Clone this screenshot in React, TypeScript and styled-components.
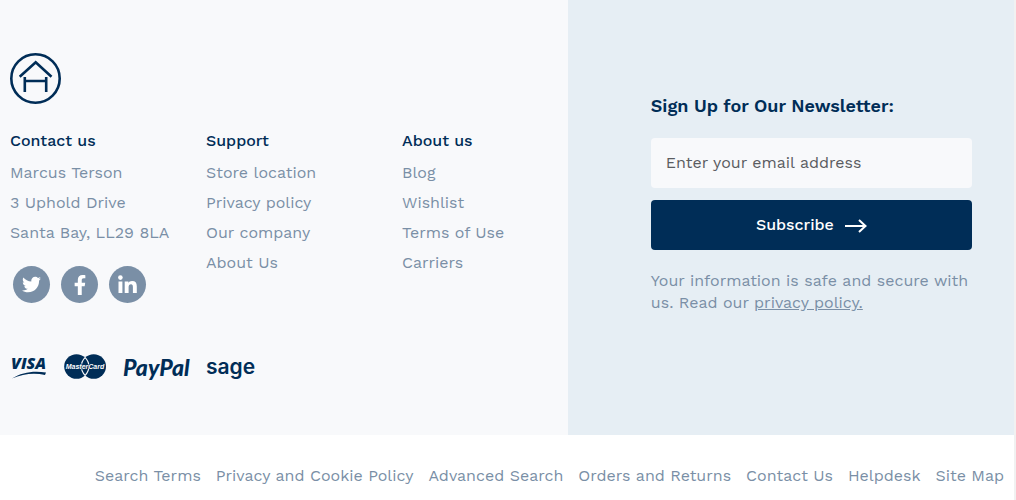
import React from "react";
import styled, { createGlobalStyle } from "styled-components";
import { FaFacebookF, FaTwitter } from "react-icons/fa";

const navy = "#002d57";
const slate = "#7a8fa6";
const sans = '"Work Sans", "Noto Sans", sans-serif';

const GlobalStyle = createGlobalStyle`
  * { box-sizing: border-box; }
  body { margin: 0; background: #fff; font-family: ${sans}; font-size: 16px; color: ${slate}; }
  h2, h3, p, ul { margin: 0; padding: 0; }
  ul { list-style: none; }
`;

const Page = styled.footer`
  border-right: 2px solid #f1f1f1;
  min-height: 100vh;
`;

const Panels = styled.div`
  display: grid;
  grid-template-columns: 56fr 44fr;
`;

const Info = styled.section`
  background: #f8f9fb;
  padding: 53px 0 53px 10px;
`;

const HomeLink = styled.a`
  display: block;
  width: 51px;
  height: 51px;
`;

const Columns = styled.div`
  display: grid;
  grid-template-columns: repeat(2, 196px) 1fr;
  margin-top: 20px;
`;

const ColumnTitle = styled.h3`
  font-size: 16px;
  line-height: 34px;
  font-weight: 500;
  color: ${navy};
`;

const Line = styled.li`
  line-height: 30px;
  white-space: nowrap;
`;

const PlainLink = styled.a`
  color: ${slate};
  text-decoration: none;
`;

const Social = styled.div`
  display: flex;
  gap: 11px;
  padding: 18px 0 0 3px;
`;

const SocialLink = styled.a`
  display: flex;
  align-items: center;
  justify-content: center;
  width: 37px;
  height: 37px;
  border-radius: 50%;
  background: ${slate};
  color: #fff;
`;

const Payments = styled.div`
  display: flex;
  margin-top: 51px;
  svg { display: block; overflow: visible; }
`;

const Newsletter = styled.section`
  background: #e6eef4;
  padding: 90px 42px 0 83px;
`;

const NewsletterTitle = styled.h2`
  font-size: 18px;
  line-height: 32px;
  font-weight: 600;
  color: ${navy};
`;

const Form = styled.form`
  display: grid;
  gap: 12px;
  margin: 16px 0 20px;
`;

const EmailInput = styled.input`
  width: 100%;
  height: 50px;
  padding: 0 15px 2px;
  border: 0;
  border-radius: 4px;
  background: #f8f9fb;
  font: 16px ${sans};
  color: #5a5c61;
  &::placeholder { color: #5a5c61; opacity: 1; }
`;

const SubscribeButton = styled.button`
  display: flex;
  align-items: center;
  justify-content: center;
  gap: 11px;
  height: 50px;
  padding: 0 0 2px;
  border: 0;
  border-radius: 4px;
  background: ${navy};
  color: #fff;
  font: 500 16px ${sans};
`;

const Note = styled.p`
  line-height: 22px;
`;

const PolicyLink = styled.a`
  color: ${slate};
`;

const BottomNav = styled.nav`
  display: flex;
  justify-content: flex-end;
  gap: 15px;
  padding: 30px 10px 0;
  line-height: 22px;
  white-space: nowrap;
`;

function LinkedInMark({ size }: { size: number }) {
  return (
    <svg width={size} height={size} viewBox="0 0 19 19" fill="currentColor">
      <circle cx="2.4" cy="2.6" r="2.3" />
      <path d="M.5 6.4h3.9V18H.5zM6.7 6.4h3.7V8c.7-1.2 1.9-1.9 3.7-1.9 3.3 0 4.7 1.9 4.7 5.2V18h-3.9v-6c0-1.7-.5-2.7-1.9-2.7-1.6 0-2.4 1.1-2.4 2.8V18H6.7z" />
    </svg>
  );
}

const contact = ["Marcus Terson", "3 Uphold Drive", "Santa Bay, LL29 8LA"];
const linkColumns = [
  { title: "Support", links: ["Store location", "Privacy policy", "Our company", "About Us"] },
  { title: "About us", links: ["Blog", "Wishlist", "Terms of Use", "Carriers"] },
];
const socials = [
  { label: "Twitter", Icon: FaTwitter, size: 19 },
  { label: "Facebook", Icon: FaFacebookF, size: 20 },
  { label: "LinkedIn", Icon: LinkedInMark, size: 19 },
];
const bottomLinks = [
  "Search Terms", "Privacy and Cookie Policy", "Advanced Search",
  "Orders and Returns", "Contact Us", "Helpdesk", "Site Map",
];

function HouseLogo() {
  return (
    <svg width="51" height="51" viewBox="0 0 51 51" fill="none" stroke={navy}>
      <circle cx="25.5" cy="25.5" r="24.2" strokeWidth="2.6" />
      <path d="M9.7 23.8 25.7 9.2 41.5 23.8M14.8 24v15M36.2 24v15M14.8 28h21.4" strokeWidth="2.6" />
    </svg>
  );
}

function PaymentLogos() {
  return (
    <svg width="248" height="28" viewBox="0 0 248 28" fill={navy} role="img" aria-label="Visa, MasterCard, PayPal, Sage">
      <text x="1" y="15" fontFamily="Open Sans, sans-serif" fontSize="16" fontWeight="800" fontStyle="italic">VISA</text>
      <path d="M2 24.5C12 18 24 16.5 36 18.5L35 21C25 18.5 13 19.5 2 24.5Z" />
      <circle cx="66.5" cy="12.5" r="12.3" />
      <circle cx="83.7" cy="12.5" r="12.3" />
      <path d="M75.1 3.7c-5 5-5 12.6 0 17.6 5-5 5-12.6 0-17.6Z" fill="none" stroke="#f8f9fb" strokeWidth="1.2" />
      <text x="75" y="15" textAnchor="middle" fontFamily="Liberation Sans, sans-serif" fontSize="7" fontWeight="700" fontStyle="italic" fill="#fff" stroke={navy} strokeWidth="1" paintOrder="stroke">MasterCard</text>
      <text x="113" y="22" fontFamily="Lato, sans-serif" fontSize="23" fontWeight="900" fontStyle="italic">PayPal</text>
      <text x="196" y="20" fontFamily="Inter, sans-serif" fontSize="21" fontWeight="600">sage</text>
    </svg>
  );
}

export default function App() {
  return (
    <>
      <GlobalStyle />
      <Page>
        <Panels>
          <Info>
            <HomeLink href="#" aria-label="Home"><HouseLogo /></HomeLink>
            <Columns>
              <div>
                <ColumnTitle>Contact us</ColumnTitle>
                <ul>{contact.map((line) => <Line key={line}>{line}</Line>)}</ul>
                <Social>
                  {socials.map(({ label, Icon, size }) => (
                    <SocialLink key={label} href="#" aria-label={label}><Icon size={size} /></SocialLink>
                  ))}
                </Social>
              </div>
              {linkColumns.map(({ title, links }) => (
                <div key={title}>
                  <ColumnTitle>{title}</ColumnTitle>
                  <ul>{links.map((link) => <Line key={link}><PlainLink href="#">{link}</PlainLink></Line>)}</ul>
                </div>
              ))}
            </Columns>
            <Payments><PaymentLogos /></Payments>
          </Info>
          <Newsletter>
            <NewsletterTitle>Sign Up for Our Newsletter:</NewsletterTitle>
            <Form onSubmit={(event) => event.preventDefault()}>
              <EmailInput type="email" aria-label="Email address" placeholder="Enter your email address" />
              <SubscribeButton type="submit">
                Subscribe
                <svg width="22" height="18" viewBox="0 0 22 18" fill="none" stroke="#fff" strokeWidth="2">
                  <path d="M0 11h20.5M14 5l6.5 6-6.5 6" />
                </svg>
              </SubscribeButton>
            </Form>
            <Note>Your information is safe and secure with us. Read our <PolicyLink href="#">privacy policy.</PolicyLink></Note>
          </Newsletter>
        </Panels>
        <BottomNav aria-label="Footer">
          {bottomLinks.map((link) => <PlainLink key={link} href="#">{link}</PlainLink>)}
        </BottomNav>
      </Page>
    </>
  );
}
